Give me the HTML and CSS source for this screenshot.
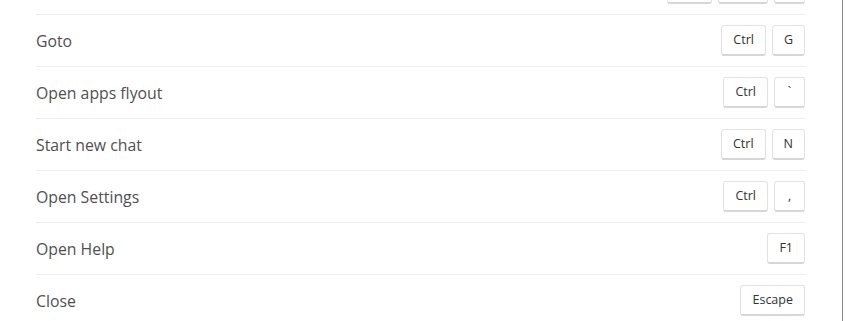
FILE: index.html
```html
<!DOCTYPE html>
<html>
<head>
<meta charset="utf-8">
<link rel="stylesheet" href="styles.css">
</head>
<body>
<div class="frame">
  <ul class="list">
    <li class="row"><span class="label">Hidden</span><span class="keys"><kbd class="key">Ctrl</kbd><kbd class="key">Shift</kbd><kbd class="key">/</kbd></span></li>
    <li class="row"><span class="label">Goto</span><span class="keys"><kbd class="key">Ctrl</kbd><kbd class="key">G</kbd></span></li>
    <li class="row"><span class="label">Open apps flyout</span><span class="keys"><kbd class="key">Ctrl</kbd><kbd class="key">`</kbd></span></li>
    <li class="row"><span class="label">Start new chat</span><span class="keys"><kbd class="key">Ctrl</kbd><kbd class="key">N</kbd></span></li>
    <li class="row"><span class="label">Open Settings</span><span class="keys"><kbd class="key">Ctrl</kbd><kbd class="key">,</kbd></span></li>
    <li class="row"><span class="label">Open Help</span><span class="keys"><kbd class="key">F1</kbd></span></li>
    <li class="row"><span class="label">Close</span><span class="keys"><kbd class="key">Escape</kbd></span></li>
  </ul>
</div>
</body>
</html>
```

FILE: styles.css
```css
html, body {
  margin: 0;
  padding: 0;
  background: #ffffff;
  overflow: hidden;
}
.frame {
  width: 842px;
  height: 321px;
  border-right: 1px solid #8a8a8a;
  overflow: hidden;
  background: #ffffff;
}
.list {
  list-style: none;
  margin: -37px 0 0 0;
  padding: 0 37px 0 36px;
  font-family: "Open Sans", "Noto Sans", sans-serif;
}
.row {
  height: 51px;
  display: flex;
  align-items: center;
  justify-content: space-between;
  border-bottom: 1px solid #ededed;
}
.row:last-child {
  border-bottom: none;
}
.label {
  font-size: 15.8px;
  color: #505050;
}
.keys {
  display: flex;
  gap: 6px;
}
.key {
  font-family: "Open Sans", "Noto Sans", sans-serif;
  font-size: 12.5px;
  color: #333333;
  height: 28px;
  line-height: 28px;
  padding: 0 11px;
  min-width: 7px;
  text-align: center;
  background: #ffffff;
  border: 1px solid #e2e2e2;
  border-bottom: 2px solid #d6d6d6;
  border-radius: 3px;
}
```
